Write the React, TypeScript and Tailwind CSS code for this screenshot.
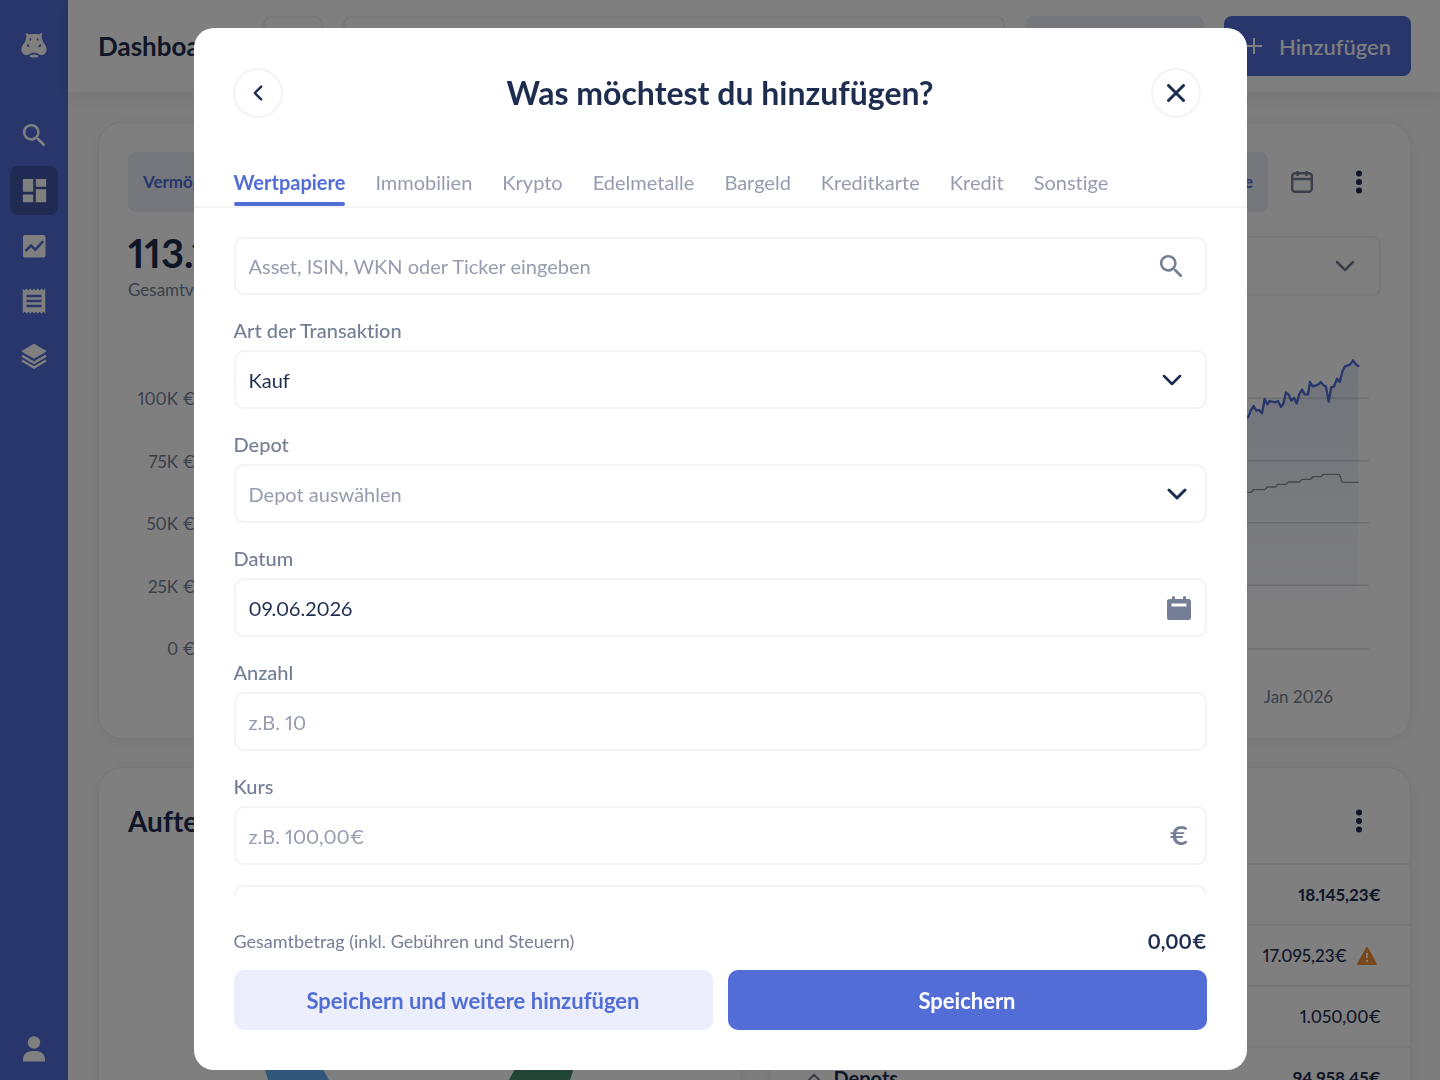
import type { ReactNode } from "react";
import { MdDashboard, MdReceipt, MdSearch } from "react-icons/md";

const TABS = ["Wertpapiere", "Immobilien", "Krypto", "Edelmetalle", "Bargeld", "Kreditkarte", "Kredit", "Sonstige"];

const VALUE_LINE =
  "-3060,560 -2700,540 -2300,500 -1900,470 -1500,420 -1100,380 -700,330 -300,300 -60,280 60,270 81,262 90,240 98,228 106,242 114,240 123,250 131,207 139,223 146,213 163,217 171,213 180,231 187,221 195,187 203,194 211,212 219,203 227,220 235,192 243,179 251,193 261,193 267,156 275,169 291,164 299,156 307,165 315,170 323,215 331,171 339,170 348,146 356,156 364,125 372,109 387,104 396,91 404,102 412,108";

const INVESTED_LINE =
  "-3060,700 -1500,600 -300,500 60,487 90,487 98,479 131,479 139,471 163,471 171,463 195,463 203,456 235,456 243,448 268,448 276,440 300,440 307,433 354,433 358,440 363,457 413,457";

function Hippo() {
  return (
    <svg viewBox="0 0 26 26" className="size-[26px]" fill="currentColor" aria-hidden="true">
      <path
        fillRule="evenodd"
        d="M5.200 1.200c.8-.7 1.500.3 1.900 1.300 1.700-.6 3.800-.6 5.900-.6s4.200 0 5.900.6c.4-1 1.100-2 1.900-1.300.8.600.5 1.700-.3 2.500.3 2.700 1 5.300 2.200 7.400 1.700 1.800 3 4.200 2.800 6.900-.2 3.300-2.600 5.400-5.600 5.100-1.100-.1-1.700-.6-2.300-1.100-1.400-1-2.800-1.300-4.600-1.300s-3.200.3-4.600 1.300c-.6.5-1.200 1-2.300 1.100-3 .3-5.400-1.800-5.600-5.100-.2-2.700 1.100-5.100 2.800-6.900 1.200-2.100 1.900-4.700 2.200-7.400-.8-.8-1.100-1.900-.3-2.500ZM9.900 6c-1.200.4-1.700 1.500-1.200 2.700 1.300.2 2.100-1.100 1.200-2.700Zm6.200 0c-.9 1.600-.1 2.900 1.200 2.700.5-1.200 0-2.300-1.200-2.700ZM6.200 12.200c-.9.8-.1 2.900 1.900 3.100.9-1.100 0-3.100-1.900-3.100Zm13.600 0c-1.900 0-2.800 2-1.900 3.100 2-.2 2.800-2.300 1.900-3.100Z"
      />
      <ellipse cx="13" cy="24" rx="4.300" ry="1.600" />
    </svg>
  );
}

function ChartBox() {
  return (
    <svg viewBox="0 0 24 24" className="size-6" aria-hidden="true">
      <rect x="1" y="1" width="22.500" height="22.500" rx="2" fill="currentColor" />
      <path d="M3.500 17l5.600-5.400 4.200 4.200 7.800-8.600" fill="none" stroke="#526dd6" strokeWidth="2.500" />
    </svg>
  );
}

function Layers() {
  return (
    <svg viewBox="0 0 26 26" className="size-[26px]" aria-hidden="true">
      <path d="M13 1.200 25 8.300 13 15.200 1 8.300Z" fill="currentColor" stroke="currentColor" strokeLinejoin="round" />
      <path d="M1 12.800l12 7 12-7M1 17.500l12 7 12-7" fill="none" stroke="currentColor" strokeWidth="2.400" />
    </svg>
  );
}

function Person() {
  return (
    <svg viewBox="0 0 24 26" className="h-[26px] w-6" fill="currentColor" aria-hidden="true">
      <circle cx="12" cy="6.500" r="6.200" />
      <path d="M1 25.500v-2c0-5 4-8.500 9-8.500h4c5 0 9 3.500 9 8.500v2Z" />
    </svg>
  );
}

function Chevron({ className, w = 2.5 }: { className?: string; w?: number }) {
  return (
    <svg viewBox="0 0 20 20" className={className} fill="none" stroke="currentColor" strokeWidth={w} strokeLinecap="round" strokeLinejoin="round" aria-hidden="true">
      <path d="M2 6l8 8 8-8" />
    </svg>
  );
}

function Dots() {
  return (
    <button type="button" aria-label="Mehr" className="flex size-[30px] items-center justify-center text-[#1e2d4f]">
      <svg viewBox="0 0 6 24" className="h-6 w-1.5" fill="currentColor" aria-hidden="true">
        <circle cx="3" cy="3.500" r="3" />
        <circle cx="3" cy="12" r="3" />
        <circle cx="3" cy="20.500" r="3" />
      </svg>
    </button>
  );
}

function NavItem({ label, active, children }: { label: string; active?: boolean; children: ReactNode }) {
  return (
    <a
      href="#"
      aria-label={label}
      className={active ? "flex h-[49px] w-12 items-center justify-center rounded-lg bg-[#4355a6]" : "flex h-[49px] w-12 items-center justify-center"}
    >
      {children}
    </a>
  );
}

function Sidebar() {
  return (
    <nav className="flex w-[68px] shrink-0 flex-col items-center bg-[#526dd6] pt-8 pb-[18px] text-white shadow-lg">
      <Hippo />
      <div className="mt-[53px] flex flex-col gap-1.5">
        <NavItem label="Suche"><MdSearch size={31} /></NavItem>
        <NavItem label="Dashboard" active><MdDashboard size={31} /></NavItem>
        <NavItem label="Analyse"><ChartBox /></NavItem>
        <NavItem label="Transaktionen"><MdReceipt size={30} /></NavItem>
        <NavItem label="Depots"><Layers /></NavItem>
      </div>
      <a href="#" aria-label="Profil" className="mt-auto"><Person /></a>
    </nav>
  );
}

function Chart() {
  return (
    <div className="mt-[54px] flex">
      <div className="flex h-[311px] w-[67px] shrink-0 flex-col justify-between pt-[37px] text-right text-[17px] leading-6 whitespace-nowrap text-[#747e94]">
        {["100K €", "75K €", "50K €", "25K €", "0 €"].map((l) => (
          <span key={l}>{l}</span>
        ))}
      </div>
      <div className="min-w-0 flex-1 pr-3 pl-1.5">
        <svg viewBox="0 0 3504 930" preserveAspectRatio="xMaxYMin slice" className="h-[310px] w-full" role="img" aria-label="Vermögensverlauf">
          <defs>
            <linearGradient id="fill" x1="0" y1="0" x2="0" y2="1">
              <stop offset="0" stopColor="#526dd6" stopOpacity="0.160" />
              <stop offset="1" stopColor="#526dd6" stopOpacity="0" />
            </linearGradient>
          </defs>
          <g transform="translate(3060 -60)" fill="none">
            {[205, 392, 578, 766, 957].map((y) => (
              <path key={y} d={`M-3060 ${y}H445`} stroke="#dcdde2" strokeWidth="4.500" />
            ))}
            <polygon points={`${VALUE_LINE} 412,900 -3060,900`} fill="url(#fill)" />
            <polyline points={INVESTED_LINE} stroke="#8a8e9c" strokeWidth="4" />
            <polyline points={VALUE_LINE} stroke="#526dd6" strokeWidth="7" strokeLinejoin="round" strokeLinecap="round" />
          </g>
        </svg>
        <div className="flex h-6 justify-end pr-9 text-[17px] leading-6 text-[#747e94]">
          <span className="mt-[25px]">Jan 2026</span>
        </div>
      </div>
    </div>
  );
}

function Dashboard() {
  const card = "rounded-3xl border border-[#ececee] bg-white shadow-[0_2px_16px_rgba(0,0,0,0.05)]";
  return (
    <div className="flex min-w-0 flex-1 flex-col bg-[#fbfbfb]">
      <header className="flex h-[93px] shrink-0 items-center gap-5 border-b border-[#f0f0f2] bg-white pr-[29px] pl-[30px] shadow-[0_4px_16px_rgba(0,0,0,0.08)]">
        <div className="w-[145px] text-[26px] font-bold">Dashboard</div>
        <div className="h-[60px] w-[60px] rounded-lg border-2 border-[#eeeff1]" />
        <div className="h-[60px] flex-1 rounded-lg border-2 border-[#eeeff1]" />
        <div className="h-[60px] w-[179px] rounded-lg bg-[#eceefb]" />
        <button type="button" className="flex h-[60px] w-[187px] items-center justify-end gap-4 rounded-lg bg-[#526dd6] pr-5 text-[22px] font-medium text-white">
          <svg viewBox="0 0 18 18" className="size-[18px]" stroke="currentColor" strokeWidth="2" aria-hidden="true">
            <path d="M9 1v16M1 9h16" />
          </svg>
          Hinzufügen
        </button>
      </header>
      <main className="flex flex-col gap-7 pt-[29px] pr-[29px] pl-[30px]">
        <section className={`${card} h-[617px] px-[29px] pt-[29px]`}>
          <div className="flex items-center justify-between">
            <div className="flex h-[60px] items-center rounded-lg bg-[#eceefb] px-[15px] text-[17px] font-bold text-[#526dd6]">Vermögen</div>
            <div className="flex items-center gap-[19px]">
              <div className="flex h-[60px] w-36 items-center justify-end rounded-lg bg-[#eceefb] px-[15px] text-[17px] font-bold text-[#526dd6]">Gesamte</div>
              <button type="button" aria-label="Zeitraum" className="flex size-[30px] items-center justify-center text-[#747e94]">
                <svg viewBox="0 0 22 24" className="h-6 w-[22px]" fill="none" stroke="currentColor" strokeWidth="2.400" aria-hidden="true">
                  <rect x="1.200" y="3.200" width="19.600" height="18.500" rx="3" />
                  <path d="M1 9h20M6.500 1v5M15.500 1v5" />
                </svg>
              </button>
              <div className="pl-2 pr-[7px]"><Dots /></div>
            </div>
          </div>
          <div className="mt-6 flex h-[60px] items-start justify-between">
            <div>
              <div className="text-[40px] leading-[34px] font-bold">113.198,45€</div>
              <div className="mt-2 text-[17px] leading-6 text-[#747e94]">Gesamtvermögen</div>
            </div>
            <div className="flex h-[60px] w-[300px] items-center justify-end rounded-lg border-2 border-[#eeeff1] pr-6 text-[#747e94]">
              <Chevron className="size-5" />
            </div>
          </div>
          <Chart />
        </section>
        <div className="grid grid-cols-2 gap-7">
          <section className={`${card} h-[420px]`}>
            <h2 className="flex h-[95px] items-center px-[29px] pt-2.5 text-[28px] font-bold">Aufteilung</h2>
            <svg viewBox="0 0 322 322" className="mx-auto size-[322px]" fill="none" strokeWidth="55" aria-hidden="true">
              <circle cx="161" cy="161" r="133.500" stroke="#60aef2" />
              <path d="M161 27.500a133.500 133.500 0 0 1 0 267" stroke="#45886a" />
            </svg>
          </section>
          <section className={`${card} h-[420px]`}>
            <div className="flex h-[95px] items-center justify-end pt-2.5 pr-9"><Dots /></div>
            <table className="w-full border-collapse text-[17px]">
              <tbody>
                <tr className="h-[61px] border-t-2 border-[#eeeff1] font-bold">
                  <td className="pl-[64px]">Konten</td>
                  <td className="pr-[29px] text-right">18.145,23€</td>
                </tr>
                <tr className="h-[61px] border-t-2 border-[#eeeff1] font-medium">
                  <td className="pl-[64px]">Girokonto</td>
                  <td className="pr-[33px]">
                    <div className="flex items-center justify-end gap-2.5">
                      17.095,23€
                      <svg viewBox="0 0 20 18" className="h-[18px] w-5" aria-hidden="true">
                        <path d="M10 1 19 17H1Z" fill="#f58f3a" stroke="#f58f3a" strokeWidth="2" strokeLinejoin="round" />
                        <path d="M10 6v5M10 13v2" stroke="#fff" strokeWidth="2" />
                      </svg>
                    </div>
                  </td>
                </tr>
                <tr className="h-[61px] border-t-2 border-[#eeeff1] font-medium">
                  <td className="pl-[64px]">Sparkonto</td>
                  <td className="pr-[29px] text-right">1.050,00€</td>
                </tr>
                <tr className="h-[61px] border-t-2 border-[#eeeff1] font-bold">
                  <td className="pl-9 text-xl">
                    <div className="flex items-center gap-3">
                      <Chevron className="size-4 rotate-180 text-[#747e94]" />
                      Depots
                    </div>
                  </td>
                  <td className="pr-[29px] text-right">94.958,45€</td>
                </tr>
              </tbody>
            </table>
          </section>
        </div>
      </main>
    </div>
  );
}

const FIELD =
  "block w-full appearance-none rounded-[10px] border-2 border-[#f2f3f4] bg-white px-[13px] text-xl text-[#1e2d4f] outline-none placeholder:text-[#959caf] placeholder:opacity-100";

function Field({ id, label, icon, children }: { id: string; label: string; icon?: ReactNode; children: ReactNode }) {
  return (
    <div>
      <label htmlFor={id} className="mb-[5px] block text-xl leading-[30px] font-medium text-[#747e94]">{label}</label>
      <div className="relative">
        {children}
        {icon}
      </div>
    </div>
  );
}

function AddDialog() {
  const round = "flex size-[50px] items-center justify-center rounded-full border-2 border-[#f2f3f4]";
  return (
    <div role="dialog" aria-modal="true" aria-labelledby="dialog-title" className="flex h-full w-full max-w-[1053px] flex-col overflow-hidden rounded-[20px] bg-white">
      <div className="flex items-center justify-between pt-10 pr-[46px] pl-[39px]">
        <button type="button" aria-label="Zurück" className={round}>
          <Chevron className="size-4 rotate-90" w={3} />
        </button>
        <h1 id="dialog-title" className="pl-[7px] text-[32px] leading-[50px] font-bold">Was möchtest du hinzufügen?</h1>
        <button type="button" aria-label="Schließen" className={round}>
          <svg viewBox="0 0 18 18" className="size-[18px]" stroke="currentColor" strokeWidth="3" strokeLinecap="round" aria-hidden="true">
            <path d="M1.500 1.500l15 15M16.500 1.500l-15 15" />
          </svg>
        </button>
      </div>
      <div role="tablist" className="mt-[50px] flex gap-[30px] border-b-2 border-[#f2f3f4] px-10">
        {TABS.map((t, i) => (
          <button
            key={t}
            type="button"
            role="tab"
            aria-selected={i === 0}
            className={
              i === 0
                ? "relative pb-2.5 text-xl leading-7 font-bold text-[#526dd6] after:absolute after:inset-x-0 after:bottom-0 after:h-1 after:rounded-full after:bg-[#526dd6]"
                : "pb-2.5 text-xl leading-7 text-[#959caf]"
            }
          >
            {t}
          </button>
        ))}
      </div>
      <form id="add" className="flex min-h-0 flex-1 flex-col gap-5 overflow-hidden px-10 pt-[29px]">
        <div className="relative">
          <input id="asset" aria-label="Asset" className={`${FIELD} h-[58px]`} placeholder="Asset, ISIN, WKN oder Ticker eingeben" />
          <MdSearch size={31} className="pointer-events-none absolute top-3.5 right-5 text-[#747e94]" />
        </div>
        <Field id="type" label="Art der Transaktion" icon={<Chevron className="pointer-events-none absolute top-5 right-[25px] size-5" />}>
          <select id="type" className={`${FIELD} h-[59px]`} defaultValue="Kauf">
            <option>Kauf</option>
            <option>Verkauf</option>
          </select>
        </Field>
        <Field id="depot" label="Depot" icon={<Chevron w={3} className="pointer-events-none absolute top-5 right-5 size-5" />}>
          <select id="depot" className={`${FIELD} h-[59px] text-[#959caf]!`} defaultValue="">
            <option value="">Depot auswählen</option>
          </select>
        </Field>
        <Field
          id="date"
          label="Datum"
          icon={
            <svg viewBox="0 0 24 24" className="pointer-events-none absolute top-[18px] right-4 size-6 text-[#747e94]" fill="currentColor" aria-hidden="true">
              <path fillRule="evenodd" d="M5 1.500a1.500 1.500 0 0 1 3 0V3h8V1.500a1.500 1.500 0 0 1 3 0V3h2.500A2.500 2.500 0 0 1 24 5.500v16a2.500 2.500 0 0 1-2.500 2.500h-19A2.500 2.500 0 0 1 0 21.500v-16A2.500 2.500 0 0 1 2.500 3H5ZM4.500 7.500v3h15v-3Z" />
            </svg>
          }
        >
          <input id="date" className={`${FIELD} h-[59px]`} defaultValue="09.06.2026" />
        </Field>
        <Field id="count" label="Anzahl">
          <input id="count" className={`${FIELD} h-[59px]`} placeholder="z.B. 10" />
        </Field>
        <Field id="price" label="Kurs" icon={<span className="pointer-events-none absolute inset-y-0 right-[18px] flex items-center text-[26px] font-bold text-[#747e94]">€</span>}>
          <input id="price" className={`${FIELD} h-[59px]`} placeholder="z.B. 100,00€" />
        </Field>
        <input aria-label="Gebühren" className={`${FIELD} h-[59px] shrink-0`} />
      </form>
      <div className="shrink-0 px-10 pt-8 pb-10">
        <div className="flex items-center justify-between">
          <span className="text-lg leading-7 text-[#747e94]">Gesamtbetrag (inkl. Gebühren und Steuern)</span>
          <span className="text-xl leading-7 font-bold">0,00€</span>
        </div>
        <div className="mt-[15px] grid grid-cols-2 gap-[15px] text-[22px] font-bold">
          <button type="button" className="h-[60px] rounded-[10px] bg-[#eceefb] text-[#526dd6]">Speichern und weitere hinzufügen</button>
          <button type="submit" form="add" className="h-[60px] rounded-[10px] bg-[#526dd6] text-white">Speichern</button>
        </div>
      </div>
    </div>
  );
}

export default function App() {
  return (
    <div className="flex h-screen overflow-hidden font-[Lato,sans-serif] text-[#1e2d4f] [font-feature-settings:'liga'_0,'pnum'_1]">
      <Sidebar />
      <Dashboard />
      <div className="fixed inset-0 flex justify-center bg-black/50 px-8 pt-7 pb-2.5">
        <AddDialog />
      </div>
    </div>
  );
}
